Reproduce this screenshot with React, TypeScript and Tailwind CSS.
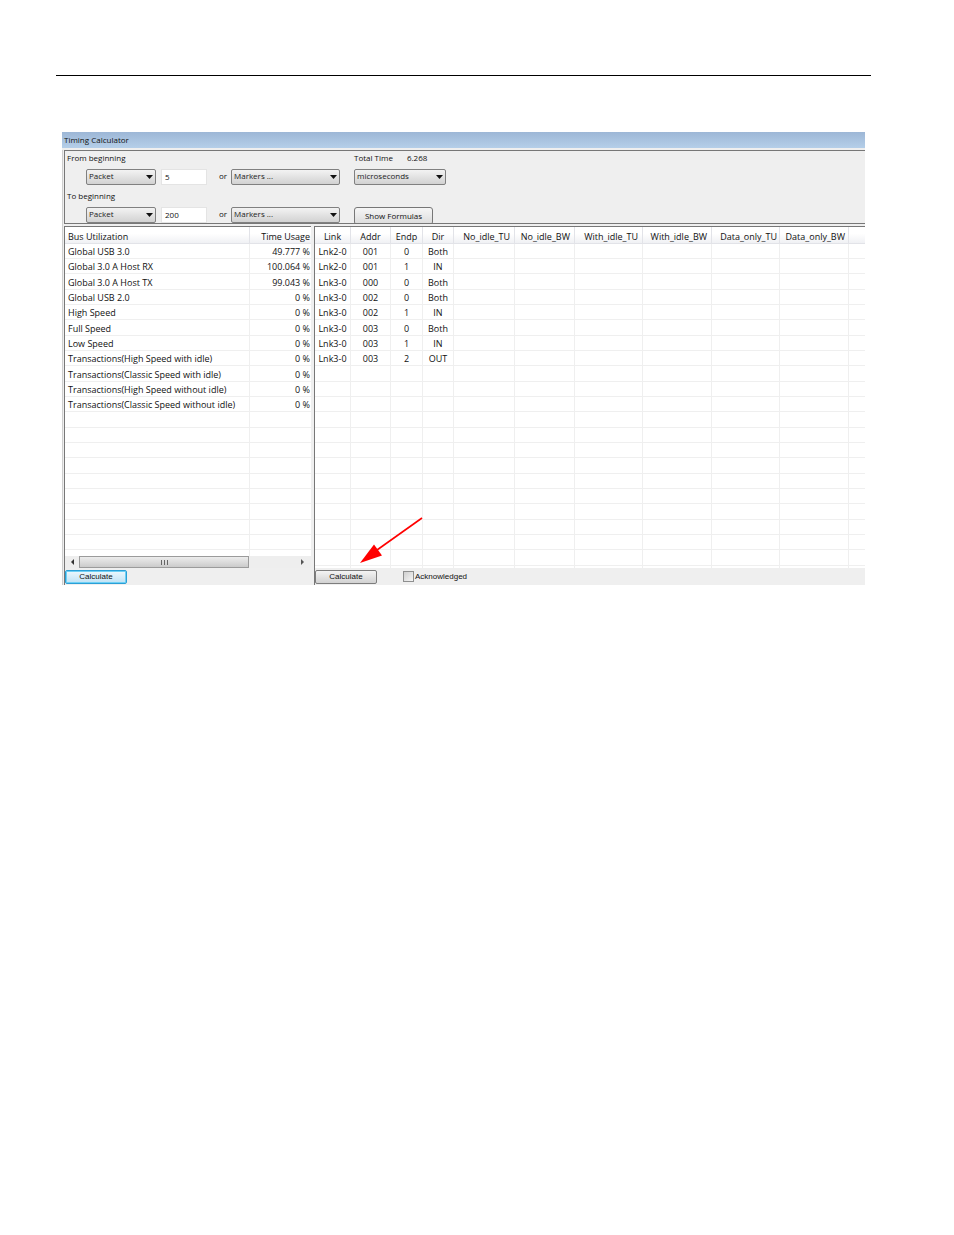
const busRows = [
  ["Global USB 3.0", "49.777 %"],
  ["Global 3.0 A Host RX", "100.064 %"],
  ["Global 3.0 A Host TX", "99.043 %"],
  ["Global USB 2.0", "0 %"],
  ["High Speed", "0 %"],
  ["Full Speed", "0 %"],
  ["Low Speed", "0 %"],
  ["Transactions(High Speed with idle)", "0 %"],
  ["Transactions(Classic Speed with idle)", "0 %"],
  ["Transactions(High Speed without idle)", "0 %"],
  ["Transactions(Classic Speed without idle)", "0 %"],
];

const linkRows = [
  ["Lnk2-0", "001", "0", "Both"],
  ["Lnk2-0", "001", "1", "IN"],
  ["Lnk3-0", "000", "0", "Both"],
  ["Lnk3-0", "002", "0", "Both"],
  ["Lnk3-0", "002", "1", "IN"],
  ["Lnk3-0", "003", "0", "Both"],
  ["Lnk3-0", "003", "1", "IN"],
  ["Lnk3-0", "003", "2", "OUT"],
];

const busColumns = [
  { name: "Bus Utilization", width: "w-[185px]", align: "text-left pl-[3px]" },
  { name: "Time Usage", width: "", align: "text-right pr-px" },
];

const linkColumns = [
  { name: "Link", width: "w-[36px]", align: "text-center" },
  { name: "Addr", width: "w-[40px]", align: "text-center" },
  { name: "Endp", width: "w-[32px]", align: "text-center" },
  { name: "Dir", width: "w-[31px]", align: "text-center" },
  { name: "No_idle_TU", width: "w-[61px]", align: "text-right pr-1" },
  { name: "No_idle_BW", width: "w-[60px]", align: "text-right pr-1" },
  { name: "With_idle_TU", width: "w-[68px]", align: "text-right pr-1" },
  { name: "With_idle_BW", width: "w-[69px]", align: "text-right pr-1" },
  { name: "Data_only_TU", width: "w-[68px]", align: "text-right pr-[2px]" },
  { name: "Data_only_BW", width: "w-[69px]", align: "text-right pr-[3px]" },
  { name: "", width: "", align: "" },
];

const LINES = 22;

function ListTable({ columns, rows, label }: any) {
  const lines = Array.from({ length: LINES }, (_, i) => rows[i] ?? []);
  return (
    <table aria-label={label} className="w-full table-fixed border-separate border-spacing-0 font-['Open_Sans',sans-serif] text-[9px] leading-3 text-[#111]">
      <thead>
        <tr className="h-[17px]">
          {columns.map((c: any, i: number) => (
            <th
              key={i}
              className={`${c.width} ${c.align} p-0 pt-[3px] font-normal whitespace-nowrap border-r border-b border-[#e2e3e8] last:border-r-0 bg-linear-to-b from-white from-40% to-[#f0f1f4]`}
            >
              {c.name}
            </th>
          ))}
        </tr>
      </thead>
      <tbody>
        {lines.map((line: string[], i: number) => (
          <tr key={i} className="h-[15px] nth-[3n]:h-4">
            {columns.map((c: any, j: number) => (
              <td
                key={j}
                className={`${c.align} p-0 pt-[2px] whitespace-nowrap border-r border-b border-[#efefef] last:border-r-0`}
              >
                {line[j]}
              </td>
            ))}
          </tr>
        ))}
      </tbody>
    </table>
  );
}

function Dropdown({ id, value, width, label }: any) {
  return (
    <div className={`relative ${width}`}>
      <select
        id={id}
        aria-label={label}
        className="block h-4 w-full appearance-none rounded-[2px] border border-[#808080] bg-linear-to-b from-[#f3f3f3] to-[#d2d2d2] pb-[2px] pl-[2px] leading-3 text-[#222]"
      >
        <option>{value}</option>
      </select>
      <svg className="pointer-events-none absolute top-1.5 right-[3px]" width="7" height="4" viewBox="0 0 7 4">
        <path d="M0 0h7L3.5 4z" fill="#111" />
      </svg>
    </div>
  );
}

function PacketRow({ id, title, count }: any) {
  return (
    <div>
      <label htmlFor={id} className="block h-[18px] pl-[2px]">
        {title}
      </label>
      <div className="flex pl-[21px]">
        <Dropdown id={id} value="Packet" width="w-[70px]" />
        <input
          aria-label={`${title} number`}
          defaultValue={count}
          className="ml-[5px] h-4 w-[46px] border border-[#e4e4e4] bg-white pb-[2px] pl-[3px] leading-3"
        />
        <label htmlFor={`${id}-marker`} className="w-6 pl-3">
          or
        </label>
        <Dropdown id={`${id}-marker`} value="Markers ..." width="w-[109px]" />
      </div>
    </div>
  );
}

export default function App() {
  return (
    <div className="min-h-screen bg-white pt-[75px] pr-[83px] pl-14">
      <hr className="border-t border-black" />

      <main className="mx-1.5 mt-14 bg-[#efefef] font-['Open_Sans',sans-serif] text-[8px] leading-[14px] text-[#111]">
        {/* Title bar */}
        <h1 className="h-4 bg-linear-to-b from-[#9db7d6] to-[#b5cfe9] pl-[2px] leading-4">
          Timing Calculator
        </h1>

        <div className="mt-[2px] border-l border-[#cfcfcf] pl-px">
          {/* Range settings */}
          <section className="flex h-[74px] gap-[14px] overflow-hidden border-t border-b border-l border-[#777]">
            <div className="flex flex-col gap-1">
              <PacketRow id="from" title="From beginning" count="5" />
              <PacketRow id="to" title="To beginning" count="200" />
            </div>
            <div>
              <div className="flex h-[18px] gap-[14px]">
                <label htmlFor="unit">Total Time</label>
                <output>6.268</output>
              </div>
              <Dropdown id="unit" value="microseconds" width="w-[92px]" />
              <button className="mt-[22px] block h-[18px] w-[79px] rounded-[3px] border border-[#777] bg-linear-to-b from-[#f6f6f6] to-[#dcdcdc] leading-4">
                Show Formulas
              </button>
            </div>
          </section>

          {/* Result lists */}
          <div className="mt-[2px] flex">
            <section className="w-[247px] shrink-0 border-t border-l border-[#777]">
              <div className="h-[329px] overflow-hidden bg-white">
                <ListTable columns={busColumns} rows={busRows} label="Bus utilization" />
              </div>
              <div className="flex h-3 items-center bg-[#eee]">
                <button aria-label="Scroll left" className="flex h-3 w-3.5 items-center justify-center">
                  <svg width="3" height="6" viewBox="0 0 3 6">
                    <path d="M3 0v6L0 3z" fill="#333" />
                  </svg>
                </button>
                <div className="flex h-3 w-[170px] items-center justify-center gap-[2px] border border-[#9b9b9b] bg-linear-to-b from-[#ededed] to-[#cbcbcb]">
                  <span className="h-[5px] w-px bg-[#666]" />
                  <span className="h-[5px] w-px bg-[#666]" />
                  <span className="h-[5px] w-px bg-[#666]" />
                </div>
                <button aria-label="Scroll right" className="ml-auto flex h-3 w-[18px] items-center justify-center">
                  <svg width="3" height="6" viewBox="0 0 3 6">
                    <path d="M0 0v6l3-3z" fill="#555" />
                  </svg>
                </button>
              </div>
              <div className="flex h-[17px] items-center">
                <button className="h-[14px] w-[62px] rounded-[2px] border border-[#2a9fd6] bg-linear-to-b from-[#eef8fd] to-[#bfe2f5] font-['Liberation_Sans',sans-serif] leading-3 ring-1 ring-[#6fd0f5] ring-inset">
                  Calculate
                </button>
              </div>
            </section>

            <section className="relative ml-[3px] min-w-0 grow border-t border-l border-[#777]">
              <div className="h-[341px] overflow-hidden bg-white">
                <ListTable columns={linkColumns} rows={linkRows} label="Endpoint usage" />
              </div>
              <div className="flex h-[17px] items-center font-['Liberation_Sans',sans-serif]">
                <button className="h-[14px] w-[62px] rounded-[2px] border border-[#7d7d7d] bg-linear-to-b from-[#f4f4f4] to-[#d2d2d2] leading-3">
                  Calculate
                </button>
                <input
                  id="ack"
                  type="checkbox"
                  className="ml-[26px] size-[11px] appearance-none border border-[#8e8f8f] bg-linear-to-br from-[#cfcfcf] to-[#f6f6f6]"
                />
                <label htmlFor="ack" className="pl-px">
                  Acknowledged
                </label>
              </div>

              {/* Callout arrow */}
              <svg className="pointer-events-none absolute top-[290px] left-[44px]" width="64" height="48" viewBox="0 0 64 48">
                <path d="M63 1 18 33" stroke="#f00" strokeWidth="1.6" fill="none" />
                <path d="M1 46 15 27.500l8 11z" fill="#f00" />
              </svg>
            </section>
          </div>
        </div>
      </main>
    </div>
  );
}
